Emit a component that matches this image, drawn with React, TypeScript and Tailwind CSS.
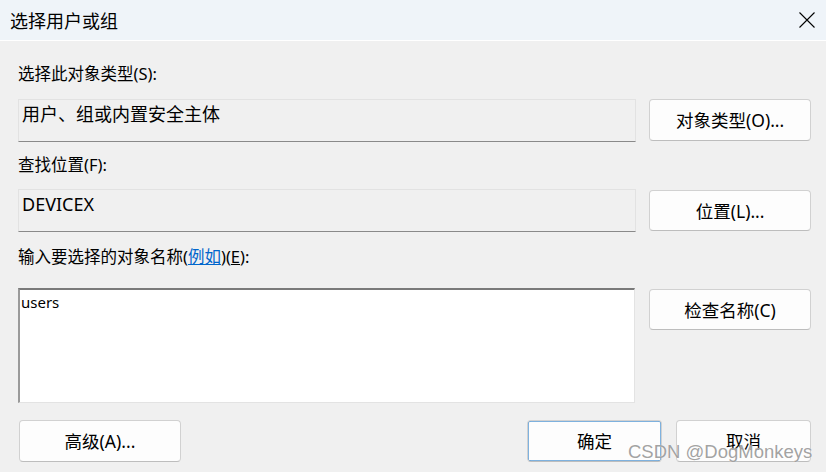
import React from "react";

const font = { fontFamily: '"Noto Sans", "Noto Sans CJK SC", sans-serif' };

function Btn({ children, className = "" }: { children: React.ReactNode; className?: string }) {
  return (
    <div
      className={`flex items-center justify-center rounded-[4px] border border-[#d1d1d1] border-b-[#bdbdbd] bg-[#fdfdfd] text-[17.5px] leading-[22px] text-black ${className}`}
    >
      {children}
    </div>
  );
}

export default function App() {
  return (
    <div
      className="relative w-[826px] h-[472px] overflow-hidden bg-[#f0f0f0] text-black"
      style={font}
    >
      {/* title bar */}
      <div className="flex h-[41px] items-center justify-between border-b border-white bg-[#eff4f9] pl-[10px] pr-[10px]">
        <span className="text-[18px] leading-[20px]" style={{ fontFamily: '"Noto Sans CJK SC", sans-serif' }}>选择用户或组</span>
        <svg width="16" height="16" viewBox="0 0 16 16" className="mr-[1px]">
          <path d="M0.5 0.5 L15.5 15.5 M15.5 0.5 L0.5 15.5" stroke="#000" strokeWidth="1.1" fill="none" />
        </svg>
      </div>

      {/* body */}
      <div className="flex flex-col pl-[18px] pr-[15px]">
        <div className="mt-[23px] h-[20px] text-[16.5px] leading-[20px]">选择此对象类型(S):</div>
        <div className="mt-[15px] flex items-start gap-[13px]">
          <div className="h-[43px] w-[619px] border border-[#e2e2e2] border-b-[#8a8a8a] bg-[#f0f0f0] pl-[3px] pt-[3px] text-[18px] leading-[22px]">
            用户、组或内置安全主体
          </div>
          <Btn className="h-[42px] w-[162px]">对象类型(O)...</Btn>
        </div>

        <div className="mt-[13px] h-[20px] text-[16.5px] leading-[20px]">查找位置(F):</div>
        <div className="mt-[14px] flex items-start gap-[13px]">
          <div className="h-[43px] w-[619px] border border-[#e2e2e2] border-b-[#8a8a8a] bg-[#f0f0f0] pl-[3px] pt-[3px] text-[18px] leading-[22px]">
            DEVICEX
          </div>
          <Btn className="mt-[1px] h-[41px] w-[162px]">位置(L)...</Btn>
        </div>

        <div className="mt-[15px] h-[20px] text-[16.5px] leading-[20px]">
          输入要选择的对象名称(<span className="text-[#0066cc] underline">例如</span>)(<span className="underline">E</span>):
        </div>
        <div className="mt-[21px] flex items-start gap-[14px]">
          <div className="h-[115px] w-[618px] border-l-2 border-t-2 border-r border-b border-l-[#9a9a9a] border-t-[#7a7a7a] border-r-[#e3e3e3] border-b-[#e3e3e3] bg-white pl-[1px] pt-[2px] text-[15px] leading-[20px]">
            users
          </div>
          <Btn className="mt-[1px] h-[41px] w-[162px]">检查名称(C)</Btn>
        </div>

        <div className="mt-[17px] flex items-start justify-between">
          <Btn className="ml-[1px] h-[42px] w-[162px]">高级(A)...</Btn>
          <div className="flex gap-[14px]">
            <Btn className="h-[42px] w-[135px] border-[#0067c0] border-b-[#0067c0] shadow-[inset_0_0_0_0.5px_#0067c0]">确定</Btn>
            <Btn className="h-[42px] w-[135px]">取消</Btn>
          </div>
        </div>
      </div>

      {/* watermark */}
      <div
        className="absolute left-[628px] top-[440px] text-[18.5px] leading-[24px] text-[#8a8a8a]/80"
        style={{ fontFamily: '"Liberation Sans", sans-serif', textShadow: "0 0 1px #fff" }}
      >
        CSDN @DogMonkeys
      </div>
    </div>
  );
}
